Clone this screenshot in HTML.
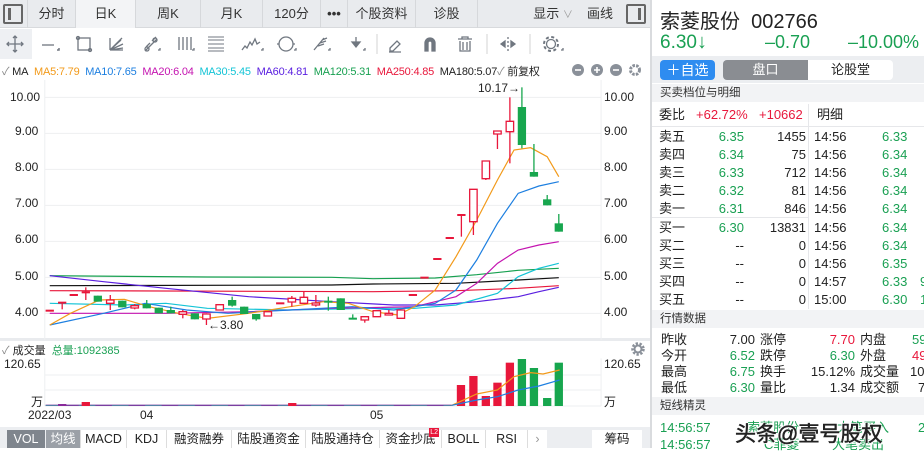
<!DOCTYPE html>
<html><head><meta charset="utf-8">
<style>
*{margin:0;padding:0;box-sizing:border-box}
body{width:924px;height:448px;overflow:hidden;background:#fff;font-family:"Liberation Sans","Noto Sans CJK SC",sans-serif;position:relative;color:#222}
.a{position:absolute;white-space:nowrap}
.tabbar{position:absolute;left:0;top:0;width:650px;height:28px;background:#e9ebee;border-bottom:1px solid #d8dadd}
.tab{position:absolute;top:0;height:28px;line-height:28px;text-align:center;font-size:13px;color:#333;border-left:1px solid #d6d8db}
.g{color:#1aa053}.r{color:#e8173b}
.sec{position:absolute;left:652px;width:272px;height:18px;background:#f2f3f5;font-size:11.5px;line-height:18px;padding-left:8px;color:#333}
.row{position:absolute;left:652px;width:272px;height:18px;font-size:13px;line-height:18px}
.row span{position:absolute}
.btab{position:absolute;top:430px;height:18px;line-height:18px;font-size:12.5px;color:#222;text-align:center;border-left:1px solid #ddd}
</style></head><body>

<div class="tabbar">
 <div class="a" style="left:3px;top:4px;width:20px;height:20px;border:2px solid #666;border-radius:2px"><div style="position:absolute;left:3px;top:2px;width:3px;height:12px;background:#666"></div></div>
 <div class="tab" style="left:27px;width:48px">分时</div>
 <div class="tab" style="left:75px;width:60px;background:#f3f4f6">日K</div>
 <div class="tab" style="left:135px;width:65px">周K</div>
 <div class="tab" style="left:200px;width:62px">月K</div>
 <div class="tab" style="left:262px;width:58px">120分</div>
 <div class="tab" style="left:320px;width:27px;font-weight:bold">•••</div>
 <div class="tab" style="left:347px;width:68px">个股资料</div>
 <div class="tab" style="left:415px;width:63px;border-right:1px solid #d6d8db">诊股</div>
 <div class="tab" style="left:528px;width:50px;border:none">显示 <span style="color:#999;font-size:10px">∨</span></div>
 <div class="tab" style="left:582px;width:36px;border:none">画线</div>
 <div class="a" style="left:626px;top:4px;width:20px;height:20px;border:2px solid #666;border-radius:2px"><div style="position:absolute;right:3px;top:2px;width:3px;height:12px;background:#666"></div></div>
</div>

<!-- toolbar -->
<div class="a" style="left:0;top:29px;width:32px;height:30px;background:#eef0f3"></div>
<svg class="a" style="left:0;top:28px" width="650" height="32" viewBox="0 0 650 32" fill="none" stroke="#707780" stroke-width="1.3">
 <path d="M15 8v16M7 16h16M13 10l2-2 2 2M13 22l2 2 2-2M9 14l-2 2 2 2M21 14l2 2-2 2"/>
 <path d="M42 17h12"/><path d="M57 22h2v-2" stroke-width="1.5"/>
 <rect x="78" y="10" width="12" height="12"/><circle cx="78" cy="10" r="1.5"/><circle cx="90" cy="22" r="1.5"/>
 <path d="M110 22l12-12M110 22l13-6M110 22l13-2M110 22l11-10M110 22v-12M110 22h13"/>
 <path d="M145 23l12-12M146 19l4-4M152 13l4-4"/><circle cx="147" cy="21" r="2"/><circle cx="155" cy="12" r="2"/><path d="M158 22h2v-2"/>
 <path d="M179 9v13M183 9v13M187 9v13M191 9v13M192 22h2v-2"/>
 <path d="M208 9h16M208 12h16M208 16h16M208 20h16M208 23h16" stroke-width="1"/>
 <path d="M242 22l3-4 2 2 3-6 2 3 3-6 2 5 3-2" /><path d="M261 22h2v-2"/>
 <circle cx="286" cy="16" r="7"/><path d="M279 16h-2M293 16h2M294 22h2v-2"/>
 <path d="M314 22l10-12M318 18l6-2M320 15l6-2M322 12l5-2M328 22h2v-2"/>
 <path d="M356 9v7M352 14l4 5 4-5z" fill="#707780"/><path d="M363 22h2v-2"/>
 <path d="M377 6v20" stroke="#ddd"/>
 <path d="M390 20l7-7 3 3-7 7h-3zM389 24h12"/>
 <path d="M425 23v-8a5 5 0 0 1 10 0v8h-3v-8a2 2 0 0 0-4 0v8z" fill="#707780"/>
 <path d="M458 11h14M462 11v-2h6v2M460 13v10h10V13M463 14v8M467 14v8"/>
 <path d="M487 6v20" stroke="#ddd"/>
 <path d="M508 9v14" stroke-dasharray="2 2"/><path d="M505 13l-4 3 4 3zM511 13l4 3-4 3z" fill="#707780"/>
 <path d="M530 6v20" stroke="#ddd"/>
 <circle cx="551" cy="16" r="4.5"/><circle cx="551" cy="16" r="7" stroke-dasharray="3 2.5" stroke-width="2"/><path d="M561 22h2v-2"/>
</svg>

<!-- MA row -->
<div class="a" style="left:2px;top:63px;font-size:11px;letter-spacing:-0.2px">
<span style="color:#888">✓</span> MA&nbsp; <span style="color:#f29a1a">MA5:7.79</span>&nbsp; <span style="color:#1d7fe0">MA10:7.65</span>&nbsp; <span style="color:#c414b0">MA20:6.04</span>&nbsp; <span style="color:#14c4d6">MA30:5.45</span>&nbsp; <span style="color:#5a1fe0">MA60:4.81</span>&nbsp; <span style="color:#17a050">MA120:5.31</span>&nbsp; <span style="color:#e8173b">MA250:4.85</span>&nbsp; <span>MA180:5.07</span><span style="color:#888">✓</span> 前复权</div>
<svg class="a" style="left:570px;top:62px" width="80" height="16">
 <circle cx="8" cy="8" r="6" fill="#8a9099"/><path d="M5 8h6" stroke="#fff" stroke-width="1.6"/>
 <circle cx="27" cy="8" r="6" fill="#8a9099"/><path d="M24 8h6M27 5v6" stroke="#fff" stroke-width="1.6"/>
 <circle cx="46" cy="8" r="6" fill="#8a9099"/><path d="M43 8h6" stroke="#fff" stroke-width="1.6"/>
 <circle cx="65" cy="8" r="4.5" fill="none" stroke="#8a9099" stroke-width="3" stroke-dasharray="2.5 1.2"/>
</svg>

<!-- main chart -->
<div class="a" style="left:0;top:338px;width:650px;height:3px;background:#e9ebee"></div>
<svg class="a" style="left:0;top:80px" width="650" height="260" viewBox="0 0 1568 780" preserveAspectRatio="none">
 <g stroke="#eeeff1" stroke-width="1">
  <path d="M108 52H1450M108 160H1450M108 268H1450M108 376H1450M108 484H1450M108 592H1450M108 700H1450" vector-effect="non-scaling-stroke"/>
  <path d="M108 0V780M1450 0V780" vector-effect="non-scaling-stroke"/>
 </g>
 <g fill="none" stroke-width="1.2">
  <polyline vector-effect="non-scaling-stroke" stroke="#e8173b" points="120,632 900,635 1100,632 1250,625 1348,617"/>
  <polyline vector-effect="non-scaling-stroke" stroke="#111" points="120,617 800,615 900,612 1100,610 1250,600 1348,593"/>
  <polyline vector-effect="non-scaling-stroke" stroke="#17a050" points="120,587 200,588 500,591 800,592 900,596 1050,594 1150,584 1250,571 1348,565"/>
  <polyline vector-effect="non-scaling-stroke" stroke="#5a1fe0" points="120,587 250,605 400,625 600,650 800,665 950,675 1050,675 1150,665 1250,650 1300,635 1348,622"/>
  <polyline vector-effect="non-scaling-stroke" stroke="#14c4d6" points="120,670 300,675 400,670 500,685 700,690 900,685 1000,685 1100,675 1200,640 1250,590 1300,565 1348,550"/>
  <polyline vector-effect="non-scaling-stroke" stroke="#c414b0" points="120,700 400,700 600,695 800,685 1000,680 1100,650 1150,610 1200,550 1250,510 1300,495 1348,485"/>
  <polyline vector-effect="non-scaling-stroke" stroke="#1d7fe0" points="120,735 250,700 350,670 450,690 550,700 700,690 850,680 950,690 1050,670 1100,630 1150,540 1200,430 1250,340 1300,318 1348,305"/>
  <polyline vector-effect="non-scaling-stroke" stroke="#f29a1a" points="120,735 170,700 240,660 300,658 360,680 430,700 500,715 600,700 700,680 780,665 840,670 900,695 960,705 1000,680 1050,630 1100,530 1150,420 1200,300 1240,210 1280,203 1320,230 1348,290"/>
 </g>
 <g id="c"></g>
</svg>
<div class="a" style="left:478px;top:81px;font-size:12px">10.17→</div>
<div class="a" style="left:208px;top:318px;font-size:12px">←3.80</div>
<script>
var C=[[120,692,692,692,692,'d'],[150,668,668,668,688,'d'],[178,645,645,645,645,'d'],[207,637,637,622,660,'d'],[236,647,665,647,665,'g'],[266,660,670,645,690,'r'],[295,662,682,662,682,'g'],[325,677,684,672,688,'r'],[354,672,685,660,685,'g'],[383,683,700,683,700,'g'],[412,690,700,680,700,'g'],[441,695,703,690,715,'r'],[470,700,718,700,718,'g'],[498,702,717,700,735,'r'],[530,674,690,674,690,'r'],[560,660,677,650,680,'g'],[589,680,702,680,702,'g'],[618,702,718,702,722,'g'],[646,695,708,695,708,'r'],[676,670,670,670,670,'d'],[704,655,666,648,680,'r'],[733,652,670,635,670,'r'],[762,669,675,645,680,'r'],[792,662,668,650,692,'g'],[822,655,690,655,690,'g'],[851,713,718,703,718,'g'],[880,710,720,710,728,'r'],[909,692,710,692,710,'r'],[938,700,705,690,705,'r'],[967,690,715,690,715,'r'],[996,645,645,645,645,'d'],[1024,593,593,593,593,'d'],[1055,537,537,537,537,'d'],[1085,474,474,474,474,'d'],[1113,405,405,405,470,'d'],[1142,328,425,328,465,'r'],[1172,243,296,243,300,'r'],[1200,153,162,153,207,'r'],[1230,124,155,52,250,'r'],[1259,81,195,22,205,'g'],[1288,276,290,192,290,'g'],[1320,358,376,345,376,'g'],[1348,430,455,402,455,'g']];
var s='';C.forEach(function(c){var x=c[0],col=c[5]=='g'?'#17a64e':'#e8173b';
s+='<line x1="'+x+'" x2="'+x+'" y1="'+c[3]+'" y2="'+c[4]+'" stroke="'+col+'" stroke-width="1.3" vector-effect="non-scaling-stroke"/>';
if(c[5]=='d')s+='<rect x="'+(x-10)+'" y="'+(c[1]-3)+'" width="20" height="6" fill="'+col+'"/>';
else if(c[5]=='g')s+='<rect x="'+(x-10)+'" y="'+c[1]+'" width="20" height="'+Math.max(6,c[2]-c[1])+'" fill="'+col+'"/>';
else s+='<rect x="'+(x-9)+'" y="'+c[1]+'" width="18" height="'+Math.max(4,c[2]-c[1])+'" fill="#fff" stroke="'+col+'" stroke-width="1.3" vector-effect="non-scaling-stroke"/>';});
document.getElementById('c').innerHTML=s;
</script>
<div class="a" style="left:10px;top:90px;font-size:12px">10.00</div>
<div class="a" style="left:15px;top:124px;font-size:12px">9.00</div>
<div class="a" style="left:15px;top:160px;font-size:12px">8.00</div>
<div class="a" style="left:15px;top:196px;font-size:12px">7.00</div>
<div class="a" style="left:15px;top:232px;font-size:12px">6.00</div>
<div class="a" style="left:15px;top:269px;font-size:12px">5.00</div>
<div class="a" style="left:15px;top:305px;font-size:12px">4.00</div>
<div class="a" style="left:604px;top:90px;font-size:12px">10.00</div>
<div class="a" style="left:604px;top:124px;font-size:12px">9.00</div>
<div class="a" style="left:604px;top:160px;font-size:12px">8.00</div>
<div class="a" style="left:604px;top:196px;font-size:12px">7.00</div>
<div class="a" style="left:604px;top:232px;font-size:12px">6.00</div>
<div class="a" style="left:604px;top:269px;font-size:12px">5.00</div>
<div class="a" style="left:604px;top:305px;font-size:12px">4.00</div>

<!-- volume -->
<div class="a" style="left:2px;top:342px;font-size:11px"><span style="color:#888">✓</span> 成交量 &nbsp;<span class="g">总量:1092385</span></div>
<svg class="a" style="left:631px;top:342px" width="14" height="14" viewBox="0 0 14 14"><circle cx="7" cy="7" r="3.5" fill="none" stroke="#8a9099" stroke-width="2"/><circle cx="7" cy="7" r="5.5" fill="none" stroke="#8a9099" stroke-width="2.5" stroke-dasharray="2.3 1.6"/></svg>
<div class="a" style="left:4px;top:357px;font-size:12px">120.65</div>
<div class="a" style="left:31px;top:393px;font-size:12px">万</div>
<div class="a" style="left:604px;top:357px;font-size:12px">120.65</div>
<div class="a" style="left:604px;top:393px;font-size:12px">万</div>
<svg class="a" style="left:0;top:330px" width="650" height="118" viewBox="0 0 1568 354" preserveAspectRatio="none">
 <path d="M108 135H1450M108 180H1450M108 228H1450M108 85V228M1450 85V228" stroke="#eeeff1" vector-effect="non-scaling-stroke"/>
 <path d="M110 226H1090" stroke="#7a3fa0" stroke-width="4"/>
 <path d="M110 226H1090" stroke="#3aa8a8" stroke-width="2" stroke-dasharray="40 40"/>
 <rect x="197" y="216" width="20" height="12" fill="#e8173b"/><rect x="140" y="222" width="20" height="6" fill="#8a2a9a"/>
 <rect x="695" y="219" width="20" height="9" fill="#e8173b"/>
 <rect x="1102" y="165" width="20" height="63" fill="#e8173b"/>
 <rect x="1132" y="138" width="20" height="90" fill="#e8173b"/>
 <rect x="1162" y="198" width="20" height="30" fill="#e8173b"/>
 <rect x="1190" y="158" width="20" height="70" fill="#e8173b"/>
 <rect x="1220" y="98" width="20" height="130" fill="#e8173b"/>
 <rect x="1249" y="87" width="20" height="141" fill="#17a64e"/>
 <rect x="1278" y="114" width="20" height="114" fill="#17a64e"/>
 <rect x="1310" y="204" width="20" height="24" fill="#17a64e"/>
 <rect x="1338" y="98" width="20" height="130" fill="#17a64e"/>
 <polyline fill="none" stroke="#f29a1a" stroke-width="1.2" vector-effect="non-scaling-stroke" points="1090,226 1150,192 1200,180 1240,140 1280,128 1310,132 1350,120"/>
 <polyline fill="none" stroke="#1d7fe0" stroke-width="1.2" vector-effect="non-scaling-stroke" points="1090,226 1150,210 1200,200 1250,180 1300,168 1350,150"/>
</svg>
<div class="a" style="left:28px;top:408px;font-size:12px">2022/03</div>
<div class="a" style="left:140px;top:408px;font-size:12px">04</div>
<div class="a" style="left:370px;top:408px;font-size:12px">05</div>

<!-- bottom tabs -->
<div class="a" style="left:0;top:427px;width:650px;height:21px;background:#eceef1"></div>
<div class="btab" style="left:7px;width:38px;background:#7f858d;color:#fff;border:none">VOL</div>
<div class="btab" style="left:46px;width:34px;background:#9ba0a7;color:#fff;border:none">均线</div>
<div class="btab" style="left:80px;width:46px;background:#fff">MACD</div>
<div class="btab" style="left:126px;width:40px;background:#fff">KDJ</div>
<div class="btab" style="left:166px;width:65px;background:#fff">融资融券</div>
<div class="btab" style="left:231px;width:74px;background:#fff">陆股通资金</div>
<div class="btab" style="left:305px;width:74px;background:#fff">陆股通持仓</div>
<div class="btab" style="left:379px;width:62px;background:#fff">资金抄底<span style="position:absolute;right:2px;top:-2px;background:#e8173b;color:#fff;font-size:7px;line-height:9px;padding:0 1px">L2</span></div>
<div class="btab" style="left:441px;width:44px;background:#fff">BOLL</div>
<div class="btab" style="left:485px;width:42px;background:#fff">RSI</div>
<div class="btab" style="left:527px;width:20px;background:#fff;color:#999">›</div>
<div class="btab" style="left:592px;width:50px;background:#fff;border:none">筹码</div>

<!-- right panel -->
<div class="a" style="left:650px;top:0;width:2px;height:448px;background:#d9dbde"></div>
<div class="a" style="left:660px;top:5px;font-size:20px;color:#222">索菱股份 &nbsp;002766</div>
<div class="a g" style="left:660px;top:31px;font-size:19px">6.30<span style="font-size:20px">↓</span></div>
<div class="a g" style="left:765px;top:32px;font-size:18px">–0.70</div>
<div class="a g" style="left:848px;top:32px;font-size:18px">–10.00%</div>
<div class="a" style="left:652px;top:56px;width:272px;height:27px;background:#eceef1"></div>
<div class="a" style="left:660px;top:60px;width:55px;height:20px;background:#2e8cf0;color:#fff;border-radius:4px;font-size:14px;line-height:20px;text-align:center">＋自选</div>
<div class="a" style="left:723px;top:60px;width:85px;height:20px;background:#8a8d92;color:#fff;border-radius:4px 0 0 4px;font-size:13px;line-height:20px;text-align:center">盘口</div>
<div class="a" style="left:808px;top:60px;width:85px;height:20px;background:#fff;color:#222;border-radius:0 4px 4px 0;font-size:13px;line-height:20px;text-align:center">论股堂</div>
<div class="sec" style="top:84px">买卖档位与明细</div>
<div class="row" style="top:106px"><span style="left:7px">委比</span><span class="r" style="left:44px">+62.72%</span><span class="r" style="left:107px">+10662</span><span style="left:165px">明细</span></div>
<div class="a" style="left:652px;top:126px;width:272px;height:1px;background:#e6e7ea"></div>
<div class="a" style="left:808px;top:104px;width:1px;height:205px;background:#e6e7ea"></div>
<div class="a" style="left:652px;top:217px;width:156px;height:1px;background:#e6e7ea"></div>
<div id="ob"></div>
<script>
var L=[['卖五','6.35','1455','14:56','6.33'],['卖四','6.34','75','14:56','6.34'],['卖三','6.33','712','14:56','6.34'],['卖二','6.32','81','14:56','6.34'],['卖一','6.31','846','14:56','6.34'],['买一','6.30','13831','14:56','6.34'],['买二','--','0','14:56','6.34'],['买三','--','0','14:56','6.35'],['买四','--','0','14:57','6.33'],['买五','--','0','15:00','6.30']];
var t=[128,146,164,182,200,219,237,255,273,291],h='';
L.forEach(function(r,i){var c=r[1]=='--'?'':'g';h+='<div class="row" style="top:'+t[i]+'px"><span style="left:7px">'+r[0]+'</span><span class="'+c+'" style="right:180px">'+r[1]+'</span><span style="right:118px">'+r[2]+'</span><span style="left:162px">'+r[3]+'</span><span class="g" style="left:230px">'+r[4]+'</span>'+(i>=8?'<span class="g" style="left:268px">'+(i==8?'9':'1')+'</span>':'')+'</div>';});
document.getElementById('ob').innerHTML=h;
</script>
<div class="sec" style="top:310px">行情数据</div>
<div class="row" style="top:331px"><span style="left:9px">昨收</span><span style="right:169px">7.00</span><span style="left:108px">涨停</span><span class="r" style="right:69px">7.70</span><span style="left:208px">内盘</span><span class="g" style="left:260px">59</span></div>
<div class="row" style="top:347px"><span style="left:9px">今开</span><span class="g" style="right:169px">6.52</span><span style="left:108px">跌停</span><span class="g" style="right:69px">6.30</span><span style="left:208px">外盘</span><span class="r" style="left:260px">49</span></div>
<div class="row" style="top:363px"><span style="left:9px">最高</span><span class="g" style="right:169px">6.75</span><span style="left:108px">换手</span><span style="right:69px">15.12%</span><span style="left:208px">成交量</span><span style="left:258px">109</span></div>
<div class="row" style="top:379px"><span style="left:9px">最低</span><span class="g" style="right:169px">6.30</span><span style="left:108px">量比</span><span style="right:69px">1.34</span><span style="left:208px">成交额</span><span style="left:266px">7</span></div>
<div class="sec" style="top:397px">短线精灵</div>
<div class="row g" style="top:419px"><span style="left:8px">14:56:57</span><span style="left:95px">索菱股份</span><span style="left:185px">大笔买入</span><span style="left:266px">2</span></div>
<div class="row g" style="top:436px"><span style="left:8px">14:56:57</span><span style="left:112px">C菲菱</span><span style="left:180px">大笔卖出</span></div>
<div class="a" style="left:735px;top:418px;font-size:21px;color:#222;-webkit-text-stroke:0.5px #222;text-shadow:0 0 2px #fff,0 0 2px #fff,1px 1px 0 #fff,-1px -1px 0 #fff">头条@壹号股权</div>
</body></html>
